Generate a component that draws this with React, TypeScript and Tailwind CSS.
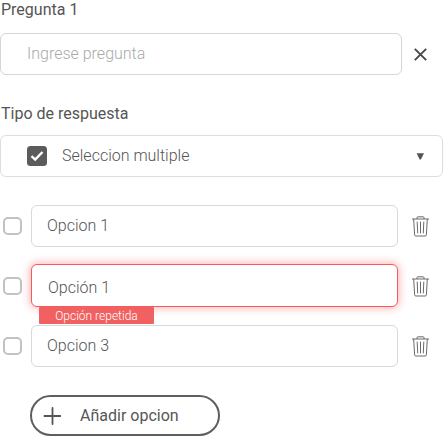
import React from 'react';

function Trash() {
  return (
    <svg className="ml-[14px] h-[21px] w-[17px] shrink-0" viewBox="0 0 17 21" fill="none" stroke="#6a6a6a" strokeWidth="1">
      <path d="M0 3H17M5 3V1.7Q5 0.8 6 0.8H11Q12 0.8 12 1.7V3" />
      <path d="M1.7 3L2.6 18.8Q2.7 20 3.8 20H13.2Q14.3 20 14.4 18.8L15.3 3" />
      <path d="M5.2 5.6L5.7 17.4M8.5 5.6V17.4M11.8 5.6L11.3 17.4" />
    </svg>
  );
}

function Option({ value, error }: { value: string; error?: string }) {
  return (
    <div className="flex h-[42px] items-center">
      <span className="ml-[3px] mr-[9px] h-[18px] w-[19px] shrink-0 rounded-[5px] border-2 border-[#c2c2c2]" />
      <div
        className={
          error
            ? 'relative -mt-px flex h-[43px] w-[367px] shrink-0 items-center rounded-md border border-[#f45c5c] bg-white pl-4 pt-[5px] shadow-[0_0_8px_1px_rgba(255,80,80,0.45)]'
            : 'flex h-[42px] w-[367px] shrink-0 items-center rounded-md border border-[#d9d9d9] bg-white pl-[15px]'
        }
      >
        <span>{value}</span>
        {error && (
          <span className="absolute left-[7px] top-[42px] flex h-[17px] w-[115px] items-center justify-center rounded-[1px] bg-[#f26161] text-[12px] leading-none text-white">
            {error}
          </span>
        )}
      </div>
      <Trash />
    </div>
  );
}

export default function App() {
  return (
    <div className="h-[436px] w-[444px] overflow-hidden bg-white font-['Roboto',sans-serif] text-[16px] font-light leading-5 text-[#555555]">
      <div className="h-[33px] pl-px font-normal">Pregunta 1</div>
      <div className="flex h-[42px] items-center">
        <div className="flex h-[42px] w-[402px] items-center rounded-md border border-[#d6d6d6] pl-[26px] text-[#aaaaaa]">
          Ingrese pregunta
        </div>
        <svg className="ml-3 h-[13px] w-[13px]" viewBox="0 0 13 13" fill="none" stroke="#484848" strokeWidth="1.9">
          <path d="M0.8 0.8L12.2 12.2M12.2 0.8L0.8 12.2" />
        </svg>
      </div>
      <div className="mt-[29px] h-[31px] pl-px font-normal">Tipo de respuesta</div>
      <div className="flex h-[42px] w-[443px] items-center rounded-md border border-[#dedede] pl-[26px] pr-[18px]">
        <svg className="h-5 w-5" viewBox="0 0 20 20" fill="none">
          <rect width="20" height="20" rx="3.5" fill="#5b5b5b" />
          <path d="M4.5 10.2L8.2 13.6L15.5 6" stroke="#ffffff" strokeWidth="2.4" />
        </svg>
        <span className="ml-[15px]">Seleccion multiple</span>
        <svg className="ml-auto h-[7px] w-[8px]" viewBox="0 0 8 7">
          <path d="M0.6 0.3H8L4.9 6.5H3.7Z" fill="#555555" />
        </svg>
      </div>
      <div className="mt-7 flex flex-col gap-[18px]">
        <Option value="Opcion 1" />
        <Option value="Opción 1" error="Opción repetida" />
        <Option value="Opcion 3" />
      </div>
      <button className="ml-[30px] mt-7 flex h-[41px] w-[190px] items-center rounded-full border-2 border-[#5e5e5e] pl-[11px] font-normal">
        <svg className="h-[18px] w-[18px]" viewBox="0 0 18 18" fill="none" stroke="#555555" strokeWidth="1.8" strokeLinecap="round">
          <path d="M9.5 0.9V17.1M1.4 9H17.6" />
        </svg>
        <span className="ml-[19px]">Añadir opcion</span>
      </button>
    </div>
  );
}
